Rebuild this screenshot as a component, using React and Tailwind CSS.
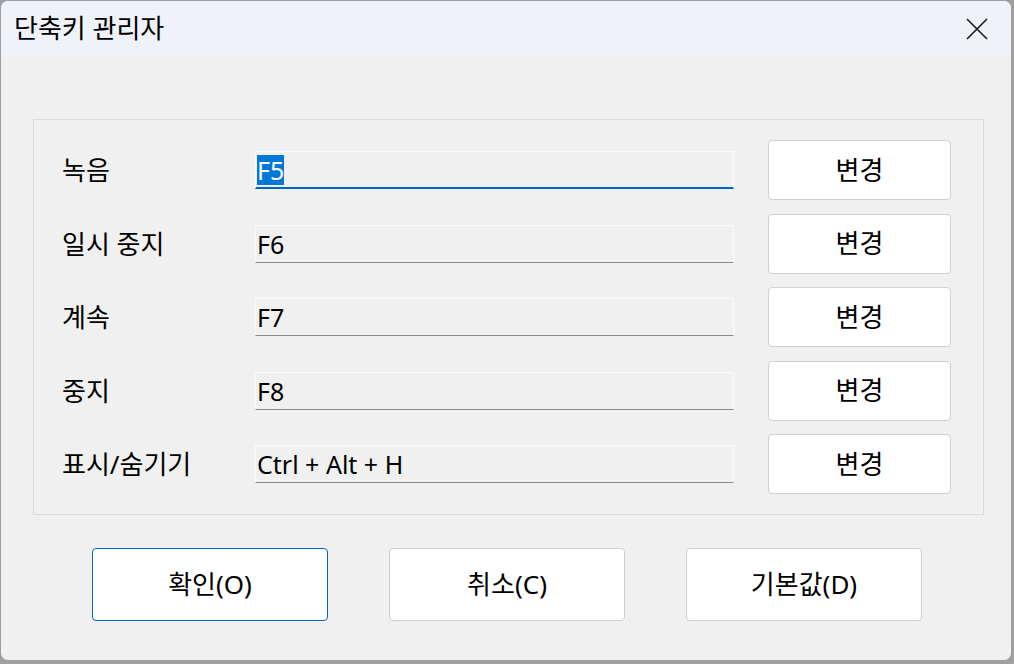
const rows = [
  { label: '녹음', value: 'F5', focused: true },
  { label: '일시 중지', value: 'F6' },
  { label: '계속', value: 'F7' },
  { label: '중지', value: 'F8' },
  { label: '표시/숨기기', value: 'Ctrl + Alt + H' },
];

const font = "font-['Noto_Sans','Noto_Sans_CJK_KR',sans-serif]";

function ShortcutRow({ label, value, focused }) {
  return (
    <div className="flex items-center h-[60px]">
      <div className="w-[193px] text-[26px] text-black leading-none">{label}</div>
      <div
        className={
          'w-[479px] h-[38px] flex items-center pl-[1px] bg-[#f0f0f0] border border-[#fafafa] ' +
          (focused ? 'border-b-2 border-b-[#0067c0]' : 'border-b border-b-[#8a8a8a]')
        }
      >
        {focused ? (
          <span className="bg-[#0078d7] text-white text-[25px] leading-[30px]">{value}</span>
        ) : (
          <span className="text-black text-[25px] leading-[30px]">{value}</span>
        )}
      </div>
      <button className="ml-[34px] w-[183px] h-[60px] bg-white border border-[#d0d0d0] rounded-[4px] text-[26px] text-black">
        변경
      </button>
    </div>
  );
}

export default function App() {
  return (
    <div className={'w-[1014px] h-[664px] bg-[#a0a0a0] ' + font}>
      <div className="w-[1012px] h-[661px] bg-[#f0f0f0] rounded-[8px] border border-[#9c9c9c] overflow-hidden flex flex-col">
        <div className="h-[56px] bg-[#eff3f9] flex items-center justify-between pl-[13px] pr-[22px] shrink-0">
          <span className="text-[26px] text-black leading-none mt-[-2px]">단축키 관리자</span>
          <svg width="24" height="24" viewBox="0 0 24 24" className="mt-[-1px]">
            <path d="M2 2 L22 22 M22 2 L2 22" stroke="#1a1a1a" strokeWidth="1.6" fill="none" />
          </svg>
        </div>
        <div className="flex flex-col pt-[62px] pl-[32px]">
          <div className="w-[951px] h-[396px] border border-[#dadada] pt-[20px] pl-[28px] flex flex-col gap-[13.5px]">
            {rows.map((r) => (
              <ShortcutRow key={r.label} {...r} />
            ))}
          </div>
          <div className="flex gap-[61px] pl-[59px] mt-[33px]">
            <button className="w-[236px] h-[73px] bg-white border border-[#0067c0] rounded-[4px] text-[26px] text-black">
              확인(O)
            </button>
            <button className="w-[236px] h-[73px] bg-white border border-[#d0d0d0] rounded-[4px] text-[26px] text-black">
              취소(C)
            </button>
            <button className="w-[236px] h-[73px] bg-white border border-[#d0d0d0] rounded-[4px] text-[26px] text-black">
              기본값(D)
            </button>
          </div>
        </div>
      </div>
    </div>
  );
}
